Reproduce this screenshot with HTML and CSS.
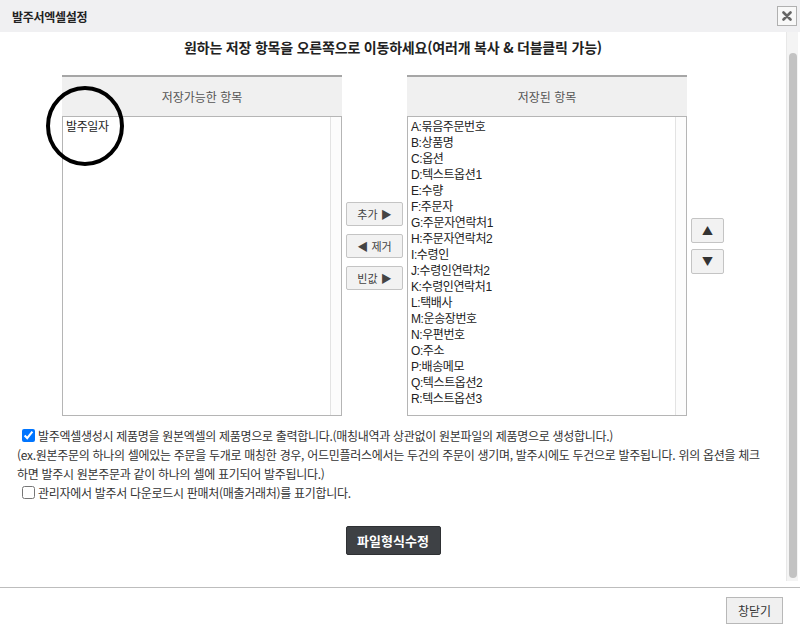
FILE: index.html
```html
<!DOCTYPE html>
<html lang="ko">
<head>
<meta charset="utf-8">
<title>발주서엑셀설정</title>
<link rel="stylesheet" href="styles.css">
</head>
<body>
<div class="window">
  <div class="titlebar">
    <span class="title">발주서엑셀설정</span>
    <button class="close" type="button" aria-label="닫기">
      <svg width="10" height="10" viewBox="0 0 10 10"><path d="M1.5 1.5 L8.5 8.5 M8.5 1.5 L1.5 8.5" stroke="#666" stroke-width="2.6" stroke-linecap="round"/></svg>
    </button>
  </div>
  <div class="body">
    <div class="content">
      <h1 class="heading">원하는 저장 항목을 오른쪽으로 이동하세요(여러개 복사 &amp; 더블클릭 가능)</h1>
      <div class="transfer">
        <div class="panel">
          <div class="panel-head">저장가능한 항목</div>
          <div class="list">
            <ul class="items">
              <li>발주일자</li>
            </ul>
            <div class="gutter"></div>
          </div>
        </div>
        <div class="mid-btns">
          <button class="btn" type="button">추가 ▶</button>
          <button class="btn" type="button">◀ 제거</button>
          <button class="btn" type="button">빈값 ▶</button>
        </div>
        <div class="panel">
          <div class="panel-head">저장된 항목</div>
          <div class="list">
            <ul class="items">
              <li>A:묶음주문번호</li>
              <li>B:상품명</li>
              <li>C:옵션</li>
              <li>D:텍스트옵션1</li>
              <li>E:수량</li>
              <li>F:주문자</li>
              <li>G:주문자연락처1</li>
              <li>H:주문자연락처2</li>
              <li>I:수령인</li>
              <li>J:수령인연락처2</li>
              <li>K:수령인연락처1</li>
              <li>L:택배사</li>
              <li>M:운송장번호</li>
              <li>N:우편번호</li>
              <li>O:주소</li>
              <li>P:배송메모</li>
              <li>Q:텍스트옵션2</li>
              <li>R:텍스트옵션3</li>
            </ul>
            <div class="gutter"></div>
          </div>
        </div>
        <div class="order-btns">
          <button class="btn sq" type="button">▲</button>
          <button class="btn sq" type="button">▼</button>
        </div>
      </div>
      <div class="options">
        <label class="opt"><input type="checkbox" checked>발주엑셀생성시 제품명을 원본엑셀의 제품명으로 출력합니다.(매칭내역과 상관없이 원본파일의 제품명으로 생성합니다.)</label>
        <p class="note">(ex.원본주문의 하나의 셀에있는 주문을 두개로 매칭한 경우, 어드민플러스에서는 두건의 주문이 생기며, 발주시에도 두건으로 발주됩니다. 위의 옵션을 체크<br>하면 발주시 원본주문과 같이 하나의 셀에 표기되어 발주됩니다.)</p>
        <label class="opt"><input type="checkbox">관리자에서 발주서 다운로드시 판매처(매출거래처)를 표기합니다.</label>
      </div>
      <div class="action">
        <button class="primary" type="button">파일형식수정</button>
      </div>
      <svg class="annot" width="84" height="84" viewBox="0 0 84 84"><ellipse cx="41" cy="41" rx="37" ry="38" fill="none" stroke="#000" stroke-width="4"/></svg>
    </div>
    <div class="vscroll"><div class="thumb"></div></div>
  </div>
  <div class="footer">
    <button class="close-btn" type="button">창닫기</button>
  </div>
</div>
</body>
</html>
```

FILE: styles.css
```css
* { box-sizing: border-box; }
html, body { margin: 0; padding: 0; }
body {
  width: 800px;
  height: 634px;
  overflow: hidden;
  background: #fff;
  color: #333;
  font-family: "Noto Sans CJK KR", "Noto Sans", sans-serif;
  font-size: 12px;
}
.window { width: 800px; height: 634px; display: flex; flex-direction: column; }

.titlebar {
  height: 32px;
  background: #f0f0f2;
  display: flex;
  align-items: center;
  justify-content: space-between;
  padding: 0 3px 0 12px;
}
.title { font-size: 12px; font-weight: bold; color: #222; letter-spacing: -0.3px; }
.close {
  width: 20px; height: 20px;
  border: 1px solid #b0b0b0;
  background: #f8f8f8;
  padding: 0;
  display: flex; align-items: center; justify-content: center;
  margin-top: -1px;
}

.body { display: flex; height: 549px; }
.content { position: relative; width: 786px; padding-top: 5px; }
.vscroll {
  width: 12px;
  background: #f4f4f4;
  border-left: 1px solid #e8e8e8;
  padding: 21px 1px 3px 2px;
}
.thumb { height: 100%; background: #c3c3c3; border-radius: 5px; }

.heading {
  margin: 0;
  text-align: center;
  font-size: 14px;
  line-height: 20px;
  font-weight: bold;
  color: #222;
  letter-spacing: -0.2px;
}

.transfer {
  margin-top: 18px;
  display: flex;
  justify-content: center;
  align-items: center;
  gap: 4px;
}
.panel { width: 280px; }
.panel-head {
  height: 41px;
  border-top: 2px solid #a6a6a6;
  background: #f0f0f0;
  display: flex; align-items: center; justify-content: center;
  font-size: 12px;
  color: #555;
}
.list {
  height: 300px;
  border: 1px solid #b5b5b5;
  display: flex;
}
.items {
  flex: 1;
  list-style: none;
  margin: 0;
  padding: 2px 3px;
  font-family: "Liberation Sans", "Noto Sans CJK KR", sans-serif;
  font-size: 12px;
  line-height: 16px;
  color: #222;
  letter-spacing: -0.4px;
}
.gutter { width: 11px; border-left: 1px solid #e3e3e3; background: #fcfcfc; }

.mid-btns { display: flex; flex-direction: column; gap: 8px; }
.btn {
  font-family: inherit;
  width: 57px;
  height: 24px;
  padding: 0;
  background: #f2f2f2;
  border: 1px solid #c4c4c4;
  border-radius: 2px;
  color: #444;
  font-size: 11px;
}
.order-btns { display: flex; flex-direction: column; gap: 6px; }
.btn.sq { width: 33px; height: 25px; font-size: 11px; color: #333; }

.options { margin-top: 10px; padding-left: 17px; line-height: 19px; font-size: 12px; color: #333; letter-spacing: -0.3px; }
.opt { display: flex; align-items: center; }
.opt input { width: 13px; height: 13px; margin: 0 3px 0 5px; }
.note { margin: 0; }

.action { margin-top: 24px; display: flex; justify-content: center; }
.primary {
  font-family: inherit;
  width: 95px;
  height: 29px;
  background: #3e4145;
  color: #fff;
  border: 1px solid #2e3033;
  border-radius: 2px;
  font-size: 13px;
  font-weight: bold;
  padding: 0;
}

.annot { position: absolute; left: 44px; top: 53px; }

.footer {
  margin-top: 6px;
  border-top: 1px solid #bdbdbd;
  flex: 1;
  display: flex;
  justify-content: flex-end;
  align-items: flex-start;
  padding: 9px 17px 0 0;
}
.close-btn {
  font-family: inherit;
  width: 57px;
  height: 27px;
  background: #f0f0f0;
  border: 1px solid #b8b8b8;
  color: #333;
  font-size: 12px;
  padding: 0;
}
```
